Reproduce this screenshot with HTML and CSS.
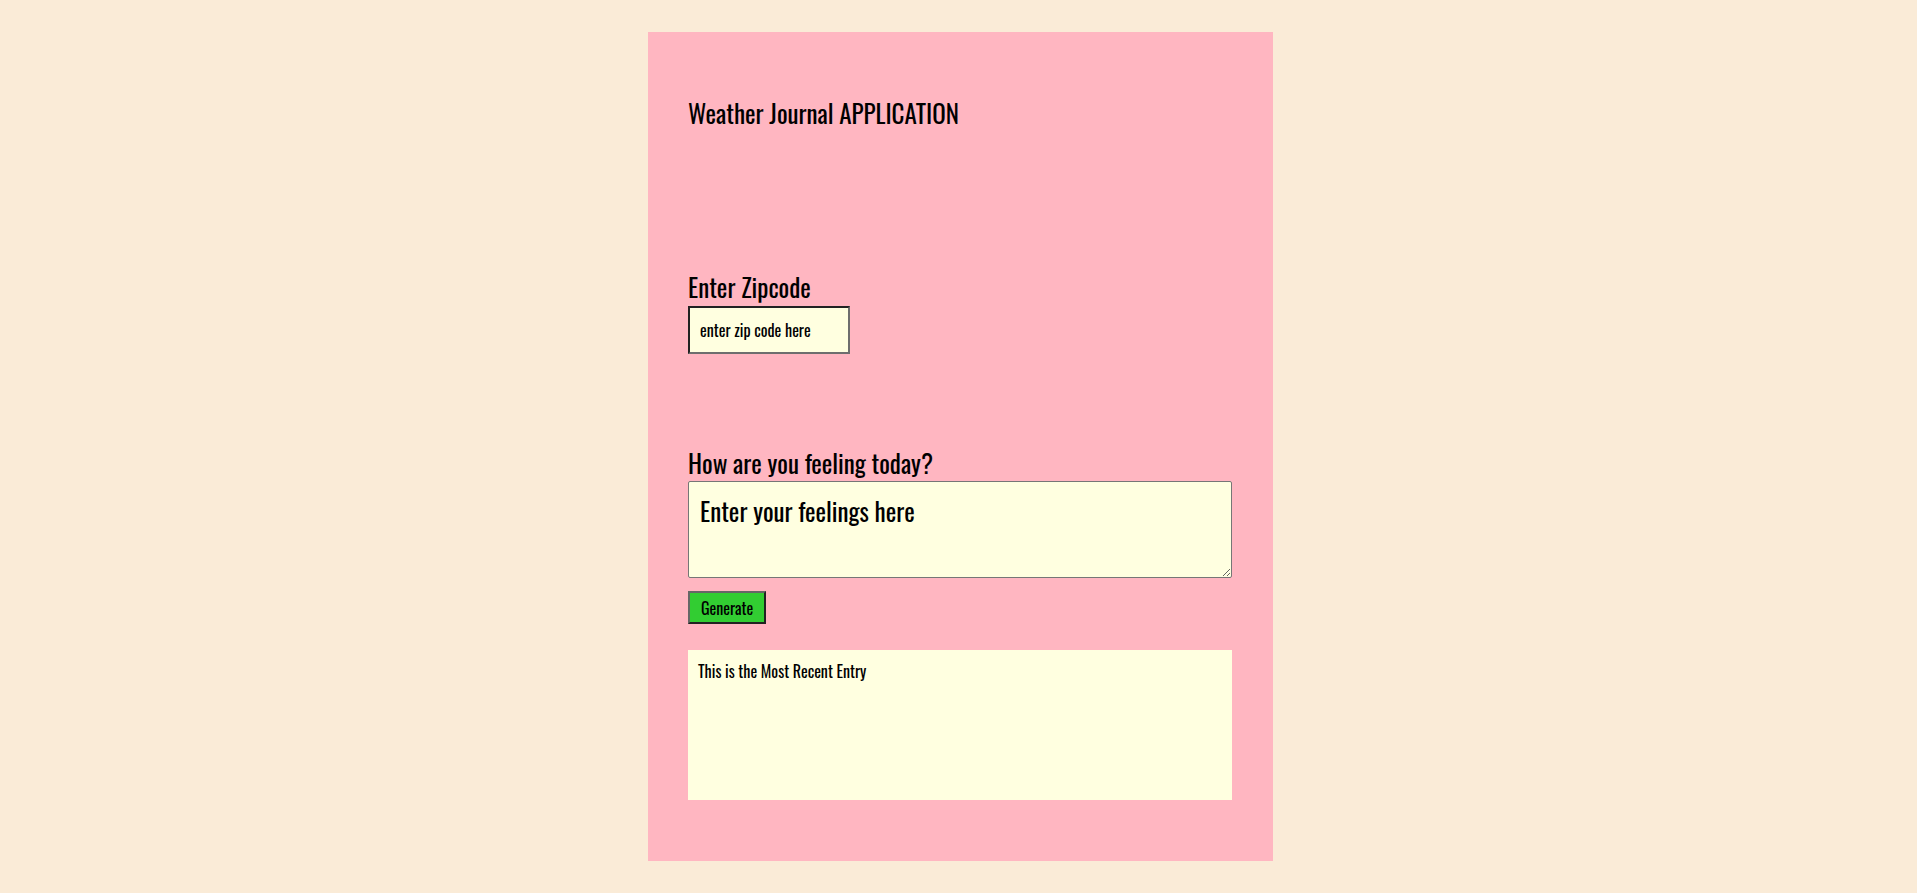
FILE: index.html
```html
<!DOCTYPE html>
<html lang="en">
<head>
<meta charset="utf-8">
<title>Weather Journal</title>
<link rel="stylesheet" href="styles.css">
</head>
<body>
<main class="page">
  <div class="card">
    <h1 class="title">Weather Journal APPLICATION</h1>
    <label class="label label-zip" for="zip">Enter Zipcode</label>
    <input class="zip" id="zip" type="text" placeholder="enter zip code here">
    <label class="label label-feel" for="feelings">How are you feeling today?</label>
    <textarea class="feelings" id="feelings" placeholder="Enter your feelings here"></textarea>
    <button class="generate" type="button">Generate</button>
    <div class="entry">
      <div class="entry-title">This is the Most Recent Entry</div>
    </div>
  </div>
</main>
</body>
</html>
```
FILE: styles.css
```css
html, body {
  margin: 0;
  padding: 0;
}
body {
  background: #faebd7;
  font-family: "Oswald", "Open Sans", sans-serif;
  color: #000;
}
.page {
  display: flex;
  justify-content: center;
  padding: 32px 0 32px 4px;
}
.card {
  background: #ffb6c1;
  width: 544px;
  padding: 61px 41px 61px 40px;
  display: flex;
  flex-direction: column;
  align-items: flex-start;
}
.title {
  margin: 0;
  height: 40px;
  line-height: 40px;
  font-size: 25px;
  font-weight: normal;
}
.label {
  display: block;
  height: 32px;
  line-height: 32px;
  font-size: 25px;
}
.label-zip {
  margin-top: 138px;
}
.zip {
  margin: 3px 0 0;
  box-sizing: border-box;
  width: 162px;
  height: 48px;
  padding: 0 10px;
  border: 2px solid;
  border-color: #222 #6e6e6e #6e6e6e #222;
  background: #ffffe0;
  font-family: inherit;
  font-size: 16px;
  color: #000;
}
.zip::placeholder { color: #000; opacity: 1; }
.label-feel {
  margin-top: 93px;
}
.feelings {
  margin: 2px 0 0;
  box-sizing: border-box;
  width: 544px;
  height: 97px;
  padding: 10px 11px;
  border: 1px solid #767676;
  border-radius: 2px;
  background: #ffffe0;
  font-family: inherit;
  font-size: 25px;
  line-height: normal;
  color: #000;
}
.feelings::placeholder { color: #000; opacity: 1; }
.generate {
  margin-top: 13px;
  box-sizing: border-box;
  width: 78px;
  height: 33px;
  padding: 0;
  border: 2px solid;
  border-color: #666 #222 #222 #666;
  background: #32cd32;
  font-family: inherit;
  font-size: 16px;
  color: #000;
}
.entry {
  margin-top: 26px;
  box-sizing: border-box;
  width: 544px;
  height: 150px;
  padding: 9px 10px;
  background: #ffffe0;
}
.entry-title {
  font-size: 16px;
  line-height: normal;
}
```
